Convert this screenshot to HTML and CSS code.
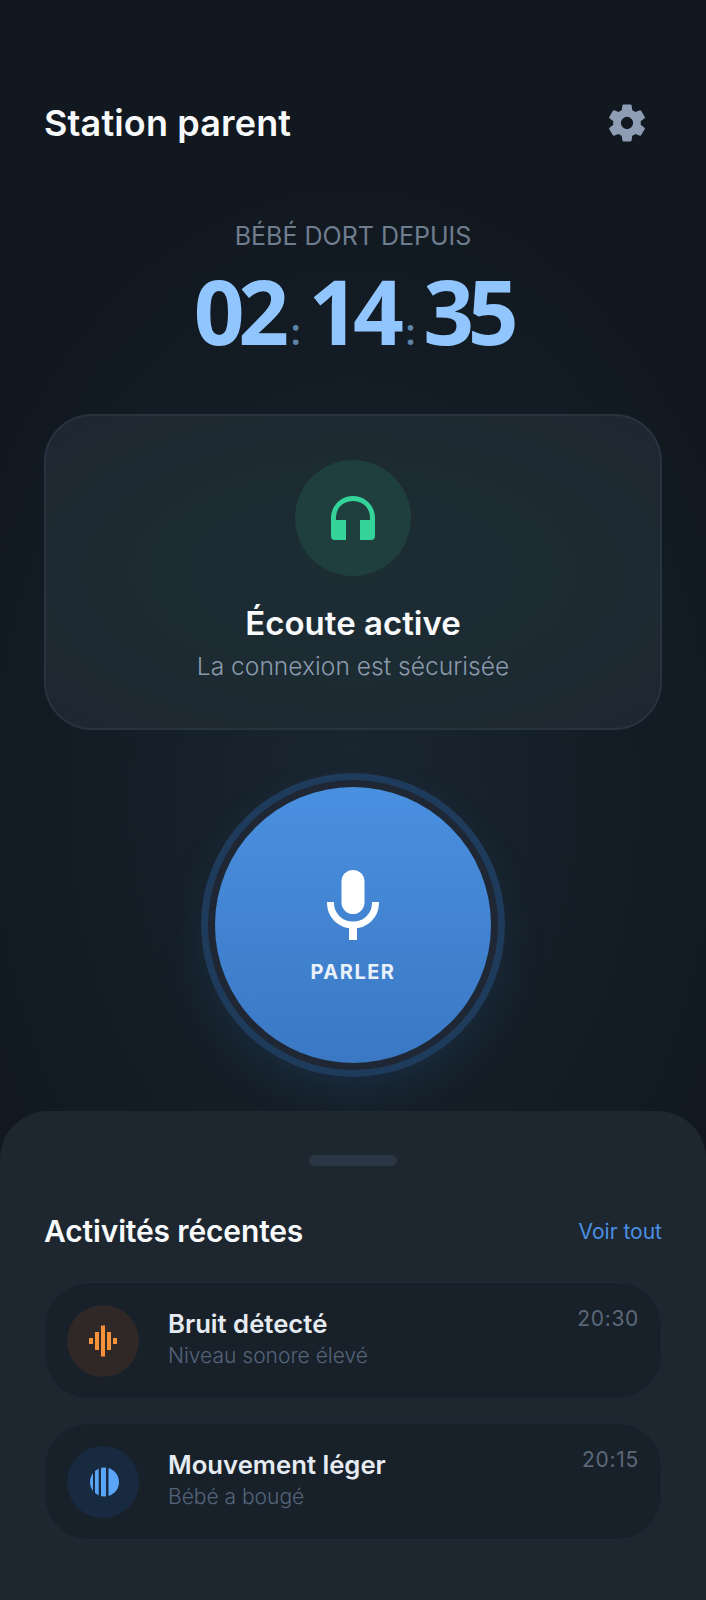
FILE: index.html
```html
<!DOCTYPE html>
<html lang="fr">
<head>
    <meta charset="UTF-8">
    <meta name="viewport" content="width=device-width, initial-scale=1.0">
    <title>Station parent</title>
    <link rel="stylesheet" href="styles.css">
</head>
<body>
    <div class="screen">
        <header class="top-bar">
            <h1>Station parent</h1>
            <svg class="gear" viewBox="0 0 24 24"><path d="M19.14 12.94c.04-.3.06-.61.06-.94 0-.32-.02-.64-.07-.94l2.03-1.58a.49.49 0 0 0 .12-.61l-1.92-3.32a.49.49 0 0 0-.59-.22l-2.39.96c-.5-.38-1.03-.7-1.62-.94l-.36-2.54a.48.48 0 0 0-.48-.41h-3.84a.47.47 0 0 0-.47.41l-.36 2.54c-.59.24-1.13.57-1.62.94l-2.39-.96a.48.48 0 0 0-.59.22L2.74 8.87a.47.47 0 0 0 .12.61l2.03 1.58c-.05.3-.09.63-.09.94s.02.64.07.94l-2.03 1.58a.49.49 0 0 0-.12.61l1.92 3.32c.12.22.37.29.59.22l2.39-.96c.5.38 1.03.7 1.62.94l.36 2.54c.05.24.24.41.48.41h3.84c.24 0 .44-.17.47-.41l.36-2.54c.59-.24 1.13-.56 1.62-.94l2.39.96c.22.08.47 0 .59-.22l1.92-3.32a.46.46 0 0 0-.12-.61l-2.01-1.58zM12 15.2A3.200 3.200 0 1 1 12 8.800a3.200 3.200 0 0 1 0 6.400z"/></svg>
        </header>

        <section class="timer-block">
            <p class="timer-label">BÉBÉ DORT DEPUIS</p>
            <div class="timer">
                <span>02</span><span class="sep">:</span><span>14</span><span class="sep">:</span><span>35</span>
            </div>
        </section>

        <section class="status-card">
            <div class="status-icon">
                <svg viewBox="0 0 44 44"><path d="M0 40V22C0 10 9.500 0 22 0s22 10 22 22v18a4 4 0 0 1-4 4H29V24h10v-2C39 12 32 5 22 5S5 12 5 22v2h10v20H4a4 4 0 0 1-4-4z"/></svg>
            </div>
            <h2>Écoute active</h2>
            <p>La connexion est sécurisée</p>
        </section>

        <div class="talk-wrap">
            <button class="talk-btn">
                <svg viewBox="0 0 52 70">
                    <rect x="14.500" y="0" width="23" height="44" rx="11.500" fill="#fff"/>
                    <path d="M3.500 32v1C3.500 45.500 13.500 55 26 55S48.500 45.500 48.500 33v-1" fill="none" stroke="#fff" stroke-width="7"/>
                    <rect x="22" y="54" width="8" height="16" fill="#fff"/>
                </svg>
                <span>PARLER</span>
            </button>
        </div>

        <section class="sheet">
            <div class="handle"></div>
            <div class="sheet-head">
                <h3>Activités récentes</h3>
                <a class="see-all">Voir tout</a>
            </div>

            <div class="activity">
                <div class="activity-icon orange">
                    <svg viewBox="0 0 28 32"><rect x="0" y="13" width="4" height="6"/><rect x="6" y="7" width="4" height="18"/><rect x="12" y="0.500" width="4" height="31"/><rect x="18" y="7" width="4" height="18"/><rect x="24" y="13" width="4" height="6"/></svg>
                </div>
                <div class="activity-text">
                    <h4>Bruit détecté</h4>
                    <p>Niveau sonore élevé</p>
                </div>
                <span class="activity-time">20:30</span>
            </div>

            <div class="activity">
                <div class="activity-icon blue">
                    <svg viewBox="-3 0 32 32"><defs><clipPath id="disc"><circle cx="14.500" cy="16" r="14.500"/></clipPath></defs><g clip-path="url(#disc)"><rect x="0" y="0" width="3" height="32"/><rect x="5" y="0" width="3.700" height="32"/><rect x="11" y="0" width="5" height="32"/><rect x="18.500" y="0" width="11" height="32"/></g></svg>
                </div>
                <div class="activity-text">
                    <h4>Mouvement léger</h4>
                    <p>Bébé a bougé</p>
                </div>
                <span class="activity-time">20:15</span>
            </div>
        </section>
    </div>
</body>
</html>
```
FILE: styles.css
```css
* {
    box-sizing: border-box;
}
body {
    margin: 0;
    padding: 0;
    background-color: #111820;
    font-family: "Inter", "Noto Sans", sans-serif;
}
h1, h2, h3, h4, p {
    margin: 0;
}
.screen {
    width: 706px;
    height: 1600px;
    overflow: hidden;
    display: flex;
    flex-direction: column;
    background: radial-gradient(ellipse 420px 620px at 353px 800px, #1a2630 0%, #141d26 60%, #111820 100%);
}

/* top */
.top-bar {
    display: flex;
    justify-content: space-between;
    align-items: center;
    height: 46px;
    margin-top: 100px;
    padding: 0 56px 0 44px;
}
.top-bar h1 {
    font-size: 36px;
    font-weight: 600;
    letter-spacing: 0.150px;
    color: #f7f9fb;
}
.gear {
    width: 46px;
    height: 46px;
    fill: #8e9db3;
}

/* timer */
.timer-block {
    margin-top: 75px;
    text-align: center;
}
.timer-label {
    font-size: 25px;
    line-height: 30px;
    color: #6f7d8f;
}
.timer {
    display: flex;
    justify-content: center;
    align-items: baseline;
    margin-top: 12px;
    font-family: "Noto Sans", sans-serif;
    font-size: 89px;
    line-height: 96px;
    font-weight: 700;
    letter-spacing: -6.500px;
    color: #90c5fd;
}
.sep {
    margin: 0 8px;
    font-size: 36px;
    font-weight: 600;
    letter-spacing: 0;
    color: #5f84a8;
}

/* status */
.status-card {
    margin: 34px 44px 0;
    height: 316px;
    padding-top: 44px;
    text-align: center;
    border: 2px solid #283340;
    border-radius: 48px;
    background: radial-gradient(ellipse at center, #1c2d34 0%, #1d2a32 60%, #1f2731 100%);
}
.status-icon {
    display: flex;
    align-items: center;
    justify-content: center;
    width: 116px;
    height: 116px;
    margin: 0 auto;
    border-radius: 50%;
    background-color: #1f3f3f;
}
.status-icon svg {
    width: 44px;
    height: 44px;
    fill: #34d399;
}
.status-card h2 {
    margin-top: 26px;
    font-size: 33px;
    line-height: 42px;
    font-weight: 600;
    color: #f8fafc;
}
.status-card p {
    margin-top: 6px;
    font-size: 24.600px;
    line-height: 32px;
    font-weight: 300;
    color: #8a9aac;
}

/* talk button */
.talk-wrap {
    display: flex;
    justify-content: center;
    margin-top: 43px;
}
.talk-btn {
    display: flex;
    flex-direction: column;
    align-items: center;
    width: 276px;
    height: 276px;
    padding: 83px 0 0;
    margin: 14px;
    border: none;
    border-radius: 50%;
    color: #fff;
    font-family: inherit;
    background: linear-gradient(180deg, #4a90e0 0%, #3a78c4 100%);
    box-shadow: 0 0 0 7px #1e2733, 0 0 0 14px #1f3b5b, 0 18px 50px 4px rgba(58, 120, 196, 0.18);
}
.talk-btn svg {
    width: 52px;
    height: 70px;
}
.talk-btn span {
    margin-top: 19px;
    font-size: 20px;
    line-height: 26px;
    font-weight: 700;
    letter-spacing: 1.500px;
    color: #e9f1fb;
}

/* bottom sheet */
.sheet {
    flex: 1;
    margin-top: 34px;
    padding: 44px 44px 0;
    border-radius: 48px 48px 0 0;
    background-color: #1e2630;
}
.handle {
    width: 88px;
    height: 11px;
    margin: 0 auto;
    border-radius: 6px;
    background-color: #2b3644;
}
.sheet-head {
    display: flex;
    justify-content: space-between;
    align-items: center;
    margin-top: 46px;
    height: 38px;
}
.sheet-head h3 {
    font-size: 30px;
    font-weight: 600;
    letter-spacing: -0.150px;
    color: #f8fafc;
}
.see-all {
    font-size: 21px;
    color: #4a90e2;
}
.activity {
    display: flex;
    align-items: center;
    gap: 29px;
    height: 117px;
    margin-top: 24px;
    padding: 0 22px;
    border: 1px solid #202934;
    border-radius: 44px;
    background-color: #18212a;
}
.sheet-head + .activity {
    margin-top: 32px;
}
.activity-icon {
    display: flex;
    flex: none;
    align-items: center;
    justify-content: center;
    width: 72px;
    height: 72px;
    border-radius: 50%;
}
.activity-icon svg {
    height: 32px;
}
.orange {
    background-color: #2f2826;
}
.orange svg {
    width: 28px;
    fill: #f5923a;
}
.blue {
    background-color: #182a40;
}
.blue svg {
    width: 32px;
    fill: #5aa5f8;
}
.activity-text {
    flex: 1;
}
.activity-text h4 {
    font-size: 25.700px;
    line-height: 28px;
    font-weight: 600;
    color: #e6ebf2;
}
.activity-text p {
    margin-top: 3px;
    font-size: 21px;
    line-height: 30px;
    font-weight: 300;
    color: #55647a;
}
.activity-time {
    align-self: flex-start;
    margin-top: 23px;
    font-size: 21px;
    letter-spacing: 0.700px;
    color: #5b6879;
}
```
